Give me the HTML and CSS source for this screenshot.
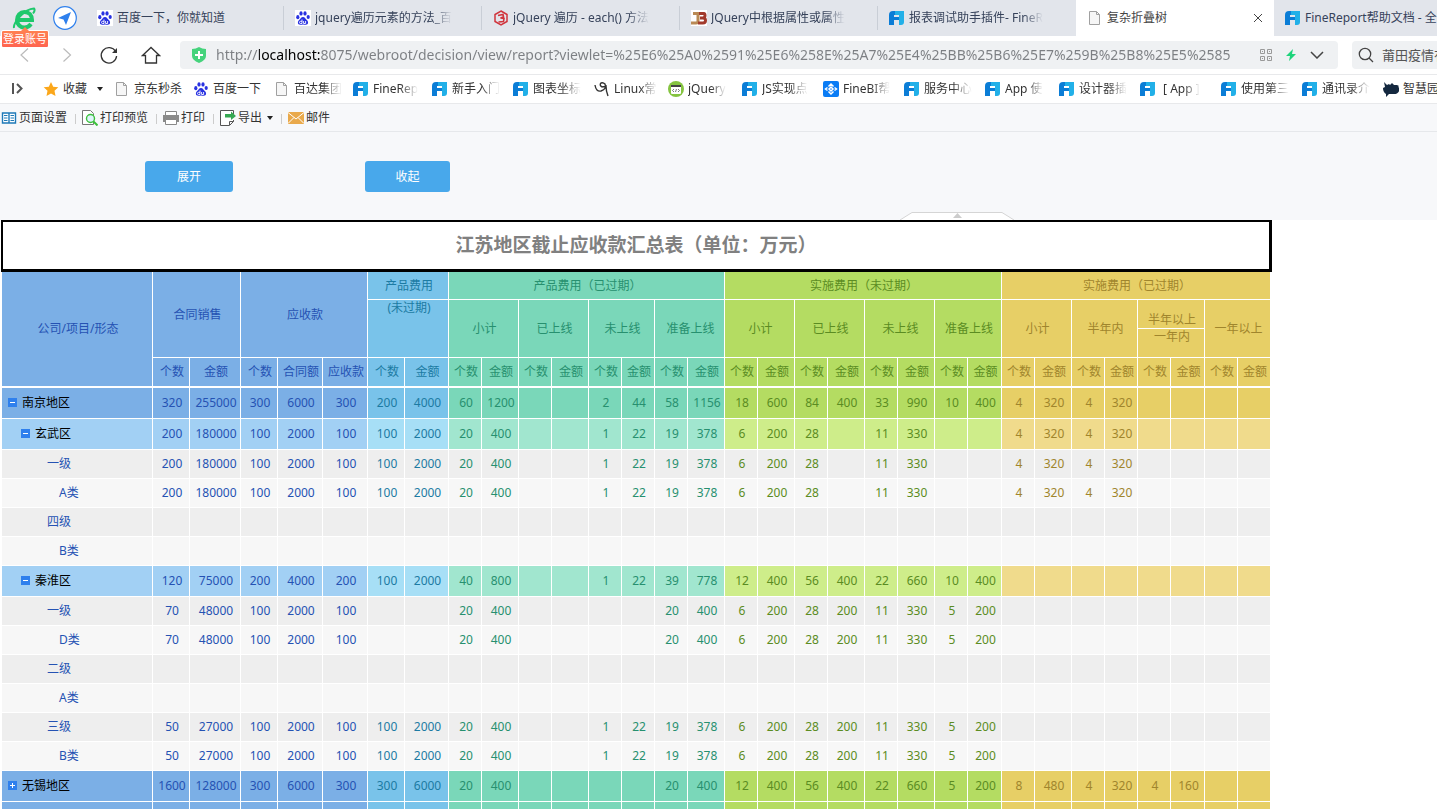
FILE: index.html
```html
<!DOCTYPE html>
<html lang="zh-CN">
	<head>
		<meta charset="UTF-8">
		<title>复杂折叠树</title>
		<link rel="stylesheet" href="styles.css">
	</head>
	<body>
		<!--图标-->
		<svg class="defs">
			<symbol id="ico-fr" viewBox="0 0 16 16">
				<path fill="#0b7dd6" d="M0 5a4 4 0 0 1 4-4h2v4H5v2h5v3H5v5a0 0 0 0 1 0 0H0z"/>
				<path fill="#22b0e8" d="M6 1h9v11a3 3 0 0 1-3 3h-2V5H6z"/>
				<path fill="#0b7dd6" d="M6 7h4v3H6z"/>
			</symbol>
			<symbol id="ico-baidu" viewBox="0 0 16 16">
				<g fill="#2932e1">
					<ellipse cx="2.8" cy="7.2" rx="1.6" ry="2.1"/>
					<ellipse cx="6" cy="3.4" rx="1.6" ry="2.2"/>
					<ellipse cx="10" cy="3.4" rx="1.6" ry="2.2"/>
					<ellipse cx="13.2" cy="7" rx="1.6" ry="2.1"/>
					<path d="M8 7c2 0 2.600 2 4 3.300 1.600 1.500 1.600 4.500-1.200 4.500-1 0-1.800-.3-2.800-.3s-1.800.3-2.800.3c-2.800 0-2.800-3-1.200-4.500C5.400 9 6 7 8 7z"/>
				</g>
				<path fill="none" stroke="#fff" stroke-width=".9" d="M7 9.500v4H5.600a1 1 0 0 1 0-2.200H7M8.600 11v2.500h2V11"/>
			</symbol>
			<symbol id="ico-page" viewBox="0 0 16 16">
				<path fill="#f6f6f6" stroke="#a0a0a0" d="M2.500 1.500h7l3 3v10h-10z"/>
				<path fill="none" stroke="#a0a0a0" d="M9.500 1.500v3h3"/>
			</symbol>
		</svg>

		<header class="browser">
			<div class="tabbar">
				<div class="account">
					<svg width="24" height="24" viewBox="0 0 24 24">
						<path fill="none" stroke="#1fc86c" stroke-width="4" d="M4 14h16c0-5-3-8-7.500-8S5 9.500 5 14s3.500 7.500 7.500 7.500c3 0 5-1.500 6.500-3.500"/>
						<path fill="none" stroke="#1fc86c" stroke-width="2" d="M2 22C1 17 12 3 22 2.500c1 1 .5 3-1 5"/>
					</svg>
					<a href="#" class="login">登录账号</a>
				</div>
				<svg width="24" height="24" viewBox="0 0 24 24">
					<circle cx="12" cy="12" r="11.300" fill="#fff" stroke="#2f80ed" stroke-width="1.200"/>
					<path fill="#2f80ed" d="M18 6 5 12l5.500 1.500L13 19z"/>
				</svg>
				<nav class="tabs">
					<a href="#"><svg class="boxed"><use href="#ico-baidu"/></svg><span>百度一下，你就知道</span></a>
					<a href="#"><svg class="boxed"><use href="#ico-baidu"/></svg><span class="fade">jquery遍历元素的方法_百</span></a>
					<a href="#">
						<svg viewBox="0 0 16 16">
							<path fill="none" stroke="#d0343c" stroke-width="1.500" d="M8 1l6 3.500v7L8 15l-6-3.500v-7z"/>
							<path fill="none" stroke="#d0343c" stroke-width="1.600" d="M5 5.500l5-1 .5 2.500L7.500 8l3.500.5-.5 3-5 .500"/>
						</svg>
						<span class="fade">jQuery 遍历 - each() 方法</span>
					</a>
					<a href="#">
						<svg class="boxed" viewBox="0 0 16 16">
							<path fill="none" stroke="#b98a55" stroke-width="3" d="M2 3.500h5V11q0 2-2 2H0"/>
							<path fill="none" stroke="#a23a2c" stroke-width="3" d="M8 3.500h5q1 0 1 2t-2 2.500H9h3q2.500 0 2.500 2.500T12 13H7"/>
						</svg>
						<span class="fade">JQuery中根据属性或属性</span>
					</a>
					<a href="#"><svg><use href="#ico-fr"/></svg><span class="fade">报表调试助手插件- FineR</span></a>
					<a href="#" class="active">
						<svg><use href="#ico-page"/></svg><span>复杂折叠树</span>
						<svg class="close" viewBox="0 0 10 10"><path fill="none" stroke="#444" d="M1 1l8 8M9 1l-8 8"/></svg>
					</a>
					<a href="#"><svg><use href="#ico-fr"/></svg><span>FineReport帮助文档 - 全</span></a>
				</nav>
			</div>

			<div class="address">
				<div class="history">
					<button type="button" aria-label="后退"><svg width="20" height="20" viewBox="0 0 20 20"><path fill="none" stroke="#bbb" stroke-width="1.200" d="M13 3.500 6 10l7 6.500"/></svg></button>
					<button type="button" aria-label="前进"><svg width="20" height="20" viewBox="0 0 20 20"><path fill="none" stroke="#bbb" stroke-width="1.200" d="M6.500 3.500l7 6.500-7 6.500"/></svg></button>
					<button type="button" aria-label="刷新"><svg width="20" height="20" viewBox="0 0 20 20"><path fill="none" stroke="#333" stroke-width="1.300" d="M16.600 6.500a7.700 7.700 0 1 0 1 4.500"/><path fill="#333" d="M18 3v5h-5z"/></svg></button>
					<button type="button" aria-label="主页"><svg width="20" height="20" viewBox="0 0 20 20"><path fill="none" stroke="#333" stroke-width="1.300" d="M4.500 10.500H1.500L10 2.500l8.500 8h-3V18h-11z"/></svg></button>
				</div>
				<div class="url">
					<svg width="14" height="16" viewBox="0 0 14 16"><path fill="#45d37c" d="M0 2q4 0 7-2 3 2 7 2v7q0 4-7 7-7-3-7-7z"/><path stroke="#fff" stroke-width="2" d="M7 4v8M3 8h8"/></svg>
					<input type="text" aria-label="地址" value="http://localhost:8075/webroot/decision/view/report?viewlet=%25E6%25A0%2591%25E6%258E%25A7%25E4%25BB%25B6%25E7%259B%25B8%25E5%2585">
					<svg width="12" height="12" viewBox="0 0 12 12"><path fill="none" stroke="#999" d="M.5.500h4v4h-4zM7.500.500h4v4h-4zM.5 7.500h4v4h-4zM7.500 7.500h4v4h-4zM2 2.500h1M9 2.500h1M2 9.500h1M9 9.500h1"/></svg>
					<svg width="10" height="12" viewBox="0 0 10 12"><path fill="#1ed47b" d="M7 0 0 7h4l-1 5 7-7H6z"/></svg>
					<svg width="14" height="8" viewBox="0 0 14 8"><path fill="none" stroke="#444" stroke-width="1.500" d="M1 1l6 6 6-6"/></svg>
				</div>
				<div class="search">
					<svg width="16" height="16" viewBox="0 0 16 16"><circle cx="7" cy="7" r="5.700" fill="none" stroke="#444" stroke-width="1.300"/><path stroke="#444" stroke-width="1.300" d="M11 11l4 4"/></svg>
					<input type="text" aria-label="搜索" value="莆田疫情有">
				</div>
			</div>

			<nav class="bookmarks">
				<svg class="fold" viewBox="0 0 12 12"><path fill="none" stroke="#555" stroke-width="2" d="M1 0v11M5 1l4.500 4.500L5 10"/></svg>
				<i class="line"></i>
				<a href="#" class="fav">
					<svg viewBox="0 0 16 16"><path fill="#fba71b" d="M8 1l2.200 4.700 5.100.6-3.800 3.500 1 5.100L8 12.400l-4.500 2.500 1-5.100L.7 6.300l5.100-.6z"/></svg><span>收藏</span><i class="caret"></i>
				</a>
				<a href="#" class="slim"><svg><use href="#ico-page"/></svg><span>京东秒杀</span></a>
				<a href="#"><svg><use href="#ico-baidu"/></svg><span>百度一下</span></a>
				<a href="#" class="slim"><svg><use href="#ico-page"/></svg><span class="fade">百达集团</span></a>
				<a href="#" class="slim"><svg><use href="#ico-fr"/></svg><span class="fade">FineRep</span></a>
				<a href="#"><svg><use href="#ico-fr"/></svg><span class="fade">新手入门</span></a>
				<a href="#"><svg><use href="#ico-fr"/></svg><span class="fade">图表坐标</span></a>
				<a href="#" class="short">
					<svg viewBox="0 0 16 16"><path fill="none" stroke="#333" stroke-width="1.400" d="M1 4q1 7 6 6 6-2 4-7-2-2-4-1-2 2 1 4l4-1q0 5 2 10"/></svg><span class="fade">Linux常</span>
				</a>
				<a href="#" class="short">
					<svg viewBox="0 0 16 16"><circle cx="8" cy="8" r="8" fill="#85c440"/><rect x="3" y="4" width="10" height="9" rx="1" fill="#fff"/><path fill="#444" d="M3 4h10v2H3z"/><path fill="none" stroke="#555" stroke-width=".8" d="M6 8 4.500 9.500 6 11M10 8l1.500 1.500L10 11M8.500 8l-1 3"/></svg><span class="fade">jQuery</span>
				</a>
				<a href="#"><svg><use href="#ico-fr"/></svg><span class="fade">JS实现点</span></a>
				<a href="#">
					<svg viewBox="0 0 16 16"><rect width="16" height="16" rx="2" fill="#0a7cf5"/><path fill="none" stroke="#fff" stroke-width="1.500" d="M5.500 5.500 8 3l2.500 2.500M5.500 10.500 8 13l2.500-2.500M4.500 6.500 2.500 8l2 1.500M11.500 6.500l2 1.500-2 1.500M8 6l2 2-2 2-2-2z"/></svg><span class="fade">FineBI帮</span>
				</a>
				<a href="#"><svg><use href="#ico-fr"/></svg><span class="fade">服务中心</span></a>
				<a href="#" class="short"><svg><use href="#ico-fr"/></svg><span class="fade">App 使</span></a>
				<a href="#"><svg><use href="#ico-fr"/></svg><span class="fade">设计器插</span></a>
				<a href="#"><svg><use href="#ico-fr"/></svg><span class="fade">&nbsp;[ App ]</span></a>
				<a href="#"><svg><use href="#ico-fr"/></svg><span class="fade">使用第三</span></a>
				<a href="#"><svg><use href="#ico-fr"/></svg><span class="fade">通讯录介</span></a>
				<a href="#">
					<svg viewBox="0 0 16 16"><path fill="#14283f" d="M1 1l3 3 2-1 1 1 2-2 2 2h3l2 1-1 1 2 1q-1 6-6 6H6l-3 3v-3Q0 11 0 7l2-1z"/></svg><span>智慧园</span>
				</a>
			</nav>
		</header>

		<div class="toolbar">
			<button type="button">
				<svg viewBox="0 0 16 16"><path fill="#fff" stroke="#1f7ab8" stroke-width="1.400" d="M1.500 3h13v10h-13zM8 3v10"/><path stroke="#1f7ab8" d="M3 5.500h3.500M3 8h3.500M3 10.500h3.500M9.500 5.500H13M9.500 8H13M9.500 10.500H13"/></svg>页面设置
			</button>
			<button type="button">
				<svg viewBox="0 0 16 16"><path fill="#fff" stroke="#777" d="M.5.500h8l3 3v11H.5z"/><circle cx="8.500" cy="8.500" r="4" fill="#dff3fb" stroke="#3cc13c" stroke-width="1.400"/><path stroke="#3cc13c" stroke-width="2" d="M11.500 11.500 15.500 15.500"/></svg>打印预览
			</button>
			<button type="button">
				<svg viewBox="0 0 16 16"><path fill="#fff" stroke="#888" d="M2.500 1.500h11v4h-11z"/><path fill="#8a8a8a" d="M0 5h16v7H0z"/><path fill="#fff" stroke="#888" d="M2.500 9.500h11v5h-11z"/></svg>打印
			</button>
			<button type="button">
				<svg viewBox="0 0 16 16"><path fill="#fff" stroke="#555" d="M13.500 4V.500H.5v15h9l4-4V10M9.500 15v-3.500h4"/><path fill="#36a852" d="M5 4h6V1.500L16 6l-5 4V7.500H5z"/></svg>导出<i class="caret"></i>
			</button>
			<button type="button">
				<svg viewBox="0 0 16 16"><path fill="#e9a94b" d="M0 2h16v12H0z"/><path fill="none" stroke="#fff" d="M0 2.500 8 9l8-6.500M0 13.500l6-6M16 13.500l-6-6"/></svg>邮件
			</button>
		</div>

		<div class="params">
			<button type="button" id="expand">展开</button>
			<button type="button" id="collapse">收起</button>
			<svg class="handle" width="114" height="8" viewBox="0 0 114 8"><path fill="#fff" stroke="#d5d5d5" d="M0 8 12 .500h90L114 8"/><path fill="#ccc" d="M57.500 1 62 6h-9z"/></svg>
		</div>

		<main>
			<div class="report">
				<h1>江苏地区截止应收款汇总表（单位<span class="colon">：</span>万元）</h1>
				<table>
					<colgroup>
						<col class="name"><col class="w37"><col class="w51"><col class="w37"><col class="w45"><col class="w45"><col class="w37"><col class="w44">
						<col class="w33"><col class="w37"><col class="w33"><col class="w37"><col class="w33"><col class="w33"><col class="w33"><col class="w37">
						<col class="w33"><col class="w37"><col class="w33"><col class="w37"><col class="w33"><col class="w37"><col class="w33"><col class="w34">
						<col class="w33"><col class="w37"><col class="w33"><col class="w33"><col class="w33"><col class="w34"><col class="w33"><col class="w33">
					</colgroup>
					<thead>
						<tr>
							<th rowspan="4" class="blue last">公司/项目/形态</th>
							<th rowspan="3" colspan="2" class="blue">合同销售</th>
							<th rowspan="3" colspan="3" class="blue">应收款</th>
							<th colspan="2" class="sky">产品费用</th>
							<th colspan="8" class="teal">产品费用（已过期）</th>
							<th colspan="8" class="lime">实施费用（未过期）</th>
							<th colspan="8" class="gold">实施费用（已过期）</th>
						</tr>
						<tr>
							<th rowspan="2" colspan="2" class="sky top">(未过期)</th>
							<th rowspan="2" colspan="2" class="teal">小计</th>
							<th rowspan="2" colspan="2" class="teal">已上线</th>
							<th rowspan="2" colspan="2" class="teal">未上线</th>
							<th rowspan="2" colspan="2" class="teal">准备上线</th>
							<th rowspan="2" colspan="2" class="lime">小计</th>
							<th rowspan="2" colspan="2" class="lime">已上线</th>
							<th rowspan="2" colspan="2" class="lime">未上线</th>
							<th rowspan="2" colspan="2" class="lime">准备上线</th>
							<th rowspan="2" colspan="2" class="gold">小计</th>
							<th rowspan="2" colspan="2" class="gold">半年内</th>
							<th colspan="2" class="gold bottom">半年以上</th>
							<th rowspan="2" colspan="2" class="gold">一年以上</th>
						</tr>
						<tr>
							<th colspan="2" class="gold top">一年内</th>
						</tr>
						<tr id="units"></tr>
					</thead>
					<tbody id="main"></tbody>
				</table>
			</div>
		</main>
		<script src="script.js"></script>
	</body>
</html>
```
FILE: styles.css
```css
*{
	box-sizing: border-box;
}
body{
	margin: 0;
	height: 100vh;
	display: flex;
	flex-direction: column;
	overflow: hidden;
	background: #fff;
	font: 12px/16px "Noto Sans","Noto Sans CJK SC",sans-serif;
	color: #333;
}
a{
	color: inherit;
	text-decoration: none;
}
button,input{
	font: inherit;
	color: inherit;
	border: 0;
	padding: 0;
	background: none;
}
button{
	cursor: pointer;
}
svg{
	flex: none;
}
.defs{
	position: absolute;
	width: 0;
	height: 0;
}
.caret{
	border: 3px solid transparent;
	border-top: 4px solid #222;
	border-bottom: 0;
}
.fade{
	-webkit-mask-image: linear-gradient(90deg,#000 60%,transparent);
	mask-image: linear-gradient(90deg,#000 60%,transparent);
}

/*标签栏*/
.browser{
	flex: none;
}
.tabbar{
	display: flex;
	align-items: center;
	height: 36px;
	background: #e2e5eb;
}
.account{
	position: relative;
	display: flex;
	padding: 0 17px 0 12px;
}
.login{
	position: absolute;
	left: 1px;
	top: 24px;
	z-index: 2;
	padding: 0 1px;
	border: 1px solid #fff;
	border-radius: 2px;
	background: linear-gradient(#ff8050,#ff6450);
	font-size: 11px;
	line-height: 16px;
	color: #fff;
	white-space: nowrap;
}
.login::before{
	content: "";
	position: absolute;
	left: 19px;
	top: -4px;
	border: 4px solid transparent;
	border-top: 0;
	border-bottom-color: #ff8050;
}
.tabs{
	flex: 1;
	display: flex;
	height: 36px;
	margin-left: 9px;
	overflow: hidden;
}
.tabs a{
	flex: none;
	display: flex;
	align-items: center;
	gap: 4px;
	width: 198px;
	padding: 0 11px;
	color: #36425a;
	position: relative;
	white-space: nowrap;
}
.tabs a::after{
	content: "";
	position: absolute;
	right: 0;
	top: 6px;
	width: 1px;
	height: 24px;
	background: #c9ced6;
}
.tabs a.active{
	background: #fff;
	color: #444;
}
.tabs a:nth-of-type(n+5)::after{
	display: none;
}
.tabs svg{
	width: 16px;
	height: 16px;
}
.tabs .boxed{
	background: #fff;
}
.tabs .fade{
	-webkit-mask-image: linear-gradient(90deg,#000 85%,transparent);
	mask-image: linear-gradient(90deg,#000 85%,transparent);
}
.tabs .close{
	width: 10px;
	height: 10px;
	margin-left: auto;
}

/*地址栏*/
.address{
	display: flex;
	align-items: center;
	height: 39px;
	padding-left: 15px;
	border-bottom: 1px solid #e8e9eb;
}
.history{
	display: flex;
	gap: 22px;
	margin-right: 19px;
}
.history button{
	width: 20px;
	height: 20px;
}
.url,.search{
	display: flex;
	align-items: center;
	height: 28px;
	background: #eff1f3;
	border-radius: 4px;
}
.url{
	flex: 1;
	gap: 14px;
	margin-right: 14px;
	padding: 0 14px 0 12px;
}
.url input{
	flex: 1;
	min-width: 0;
	margin-left: -4px;
	font-size: 14px;
	line-height: 20px;
	/*主机名显示为黑色*/
	color: transparent;
	background: linear-gradient(90deg,#7c7f83 43px,#000 43px,#000 104px,#7c7f83 104px);
	-webkit-background-clip: text;
	background-clip: text;
}
.search{
	width: 85px;
	padding-left: 6px;
	gap: 8px;
	border-radius: 4px 0 0 4px;
}
.search input{
	flex: 1;
	min-width: 0;
	font-size: 13px;
	color: #555;
}

/*书签栏*/
.bookmarks{
	display: flex;
	align-items: center;
	height: 29px;
	padding-left: 12px;
	border-bottom: 1px solid #e8e9eb;
	overflow: hidden;
	white-space: nowrap;
}
.bookmarks a{
	flex: none;
	display: flex;
	align-items: center;
	gap: 4px;
	width: 81px;
}
.bookmarks .slim{
	width: 79px;
}
.bookmarks .short{
	width: 74px;
}
.bookmarks svg{
	width: 16px;
	height: 16px;
}
.bookmarks .fold{
	width: 12px;
	height: 12px;
}
.line{
	width: 1px;
	height: 10px;
	margin: 0 11px 0 8px;
	background: #ccc;
}
.bookmarks .fav{
	width: 71px;
}
.fav .caret{
	margin-left: 6px;
}

/*工具栏*/
.toolbar{
	flex: none;
	display: flex;
	align-items: center;
	height: 28px;
	background: #f7f8fa;
	border-bottom: 1px solid #e6e8eb;
}
.toolbar button{
	display: flex;
	align-items: center;
	gap: 2px;
	padding: 0 9px 0 1px;
	margin-right: 5px;
	position: relative;
}
.toolbar svg{
	width: 16px;
	height: 16px;
}
.toolbar button:not(:last-child)::after{
	content: "";
	position: absolute;
	right: 0;
	top: 4px;
	width: 1px;
	height: 10px;
	background: #ccc;
}
.toolbar .caret{
	margin-left: 3px;
}

/*参数面板*/
.params{
	flex: none;
	position: relative;
	display: flex;
	gap: 132px;
	padding: 29px 0 28px 145px;
	background: #f7f8fa;
}
.params button{
	width: 88px;
	height: 31px;
	border-radius: 3px;
	background: #48a8eb;
	color: #fff;
}
.params #collapse{
	width: 85px;
}
.handle{
	position: absolute;
	left: 900px;
	bottom: 0;
}

/*报表*/
main{
	flex: 1;
	min-height: 0;
	overflow: hidden;
	padding-left: 1px;
}
.report{
	display: inline-block;
}
h1{
	margin: 0;
	border: solid #000;
	border-width: 2px 3px 3px 2px;
	font-size: 19px;
	line-height: 47px;
	text-align: center;
	color: #808080;
}
.colon{
	font-family: "Noto Sans CJK TC",sans-serif;
	line-height: 1;
}
table{
	margin: 0 1px;
	border-spacing: 0;
	white-space: nowrap;
}
.name{
	width: 151px;
}
.w33{
	width: 33px;
}
.w34{
	width: 34px;
}
.w37{
	width: 37px;
}
.w44{
	width: 44px;
}
.w45{
	width: 45px;
}
.w51{
	width: 51px;
}
th,td{
	padding: 0 0 0 2px;
	border: solid #fff;
	border-width: 0 1px 1px 0;
	font-weight: normal;
	text-align: center;
}
thead tr{
	height: 29px;
}
thead tr:nth-of-type(1){
	height: 28px;
}
thead tr:nth-of-type(4){
	height: 30px;
}
#units th,th.last{
	border-bottom-width: 2px;
}
th.top{
	vertical-align: top;
}
th.bottom{
	vertical-align: bottom;
}
tbody tr{
	height: 31px;
}
tbody .lv3,tbody .lv4{
	height: 29px;
}
.blue{
	background: #7bafe6;
	color: #2552b3;
}
.sky{
	background: #79c3ea;
	color: #1c7ba3;
}
.teal{
	background: #7ad7b9;
	color: #27906f;
}
.lime{
	background: #b4dc62;
	color: #5b8c22;
}
.gold{
	background: #e7cf66;
	color: #a0852d;
}
.lv2 .blue{
	background: #a2d0f4;
}
.lv2 .sky{
	background: #a7dff6;
}
.lv2 .teal{
	background: #a1e6cf;
}
.lv2 .lime{
	background: #ceed8a;
}
.lv2 .gold{
	background: #f0db8c;
}
.lv3 td{
	background: #eee;
}
.lv4 td{
	background: #f7f7f7;
}
td:nth-of-type(1){
	text-align: left;
}
.lv1 td:nth-of-type(1){
	padding-left: 6px;
	color: #000;
}
.lv2 td:nth-of-type(1){
	padding-left: 19px;
	color: #000;
}
.lv3 td:nth-of-type(1){
	padding-left: 45px;
}
.lv4 td:nth-of-type(1){
	padding-left: 57px;
}
.tree{
	display: inline-flex;
	align-items: center;
	gap: 5px;
}
.toggle{
	display: flex;
	width: 9px;
	height: 9px;
	background: #2f80ed;
}
.toggle path{
	stroke: #fff;
}
.toggle .v{
	display: none;
}
.plus .v{
	display: inline;
}
```
FILE: script.js
```js
//层级,名称,数据
var rows=[
	[1,'南京地区','320,255000,300,6000,300,200,4000,60,1200,,,2,44,58,1156,18,600,84,400,33,990,10,400,4,320,4,320'],
	[2,'玄武区','200,180000,100,2000,100,100,2000,20,400,,,1,22,19,378,6,200,28,,11,330,,,4,320,4,320'],
	[3,'一级','200,180000,100,2000,100,100,2000,20,400,,,1,22,19,378,6,200,28,,11,330,,,4,320,4,320'],
	[4,'A类','200,180000,100,2000,100,100,2000,20,400,,,1,22,19,378,6,200,28,,11,330,,,4,320,4,320'],
	[3,'四级',''],
	[4,'B类',''],
	[2,'秦淮区','120,75000,200,4000,200,100,2000,40,800,,,1,22,39,778,12,400,56,400,22,660,10,400'],
	[3,'一级','70,48000,100,2000,100,,,20,400,,,,,20,400,6,200,28,200,11,330,5,200'],
	[4,'D类','70,48000,100,2000,100,,,20,400,,,,,20,400,6,200,28,200,11,330,5,200'],
	[3,'二级',''],
	[4,'A类',''],
	[3,'三级','50,27000,100,2000,100,100,2000,20,400,,,1,22,19,378,6,200,28,200,11,330,5,200'],
	[4,'B类','50,27000,100,2000,100,100,2000,20,400,,,1,22,19,378,6,200,28,200,11,330,5,200'],
	[1,'无锡地区','1600,128000,300,6000,300,300,6000,20,400,,,,,20,400,12,400,56,400,22,660,5,200,8,480,4,320,4,160'],
	[1,'','']
];
var icon='<svg width="9" height="9"><path d="M2 4.500h5"/><path class="v" d="M4.500 2v5"/></svg>';
//列所属的颜色
function colColor(n){
	if(n<6) return 'blue';
	if(n<8) return 'sky';
	if(n<16) return 'teal';
	if(n<24) return 'lime';
	return 'gold';
}
//表头最后一行
var units='';
for(var n=1;n<32;n++){
	var text=n%2==0?'个数':'金额';
	if(n<4) text=n%2==1?'个数':'金额';
	if(n==4) text='合同额';
	if(n==5) text='应收款';
	units+='<th class="'+colColor(n)+'">'+text+'</th>';
}
document.getElementById('units').innerHTML=units;
//表体
var html='';
for(var i=0;i<rows.length;i++){
	var lv=rows[i][0];
	var name=rows[i][1];
	var nums=rows[i][2].split(',');
	if(lv<3&&name){
		var cls=name=='无锡地区'?'toggle plus':'toggle';
		name='<span class="tree"><button type="button" class="'+cls+'" aria-label="'+name+'">'+icon+'</button>'+name+'</span>';
	}
	html+='<tr class="lv'+lv+'"><td class="blue">'+name+'</td>';
	for(var n=1;n<32;n++){
		html+='<td class="'+colColor(n)+'">'+(nums[n-1]||'')+'</td>';
	}
	html+='</tr>';
}
var main=document.getElementById('main');
main.innerHTML=html;
//展开和收起
var trs=main.querySelectorAll('tr');
function toggle(start,open){
	var lv=rows[start][0];
	for(var i=start+1;i<trs.length&&rows[i][0]>lv;i++){
		trs[i].hidden=!open;
	}
	var btn=trs[start].querySelector('.toggle');
	if(btn) btn.className=open?'toggle':'toggle plus';
}
function toggleAll(open){
	for(var i=0;i<rows.length;i++){
		if(rows[i][0]<3) toggle(i,open);
	}
}
for(var i=0;i<trs.length;i++){
	(function(i){
		var btn=trs[i].querySelector('.toggle');
		if(btn) btn.onclick=function(){
			toggle(i,btn.className!='toggle');
		}
	})(i);
}
document.getElementById('expand').onclick=function(){toggleAll(true);}
document.getElementById('collapse').onclick=function(){toggleAll(false);}
```
